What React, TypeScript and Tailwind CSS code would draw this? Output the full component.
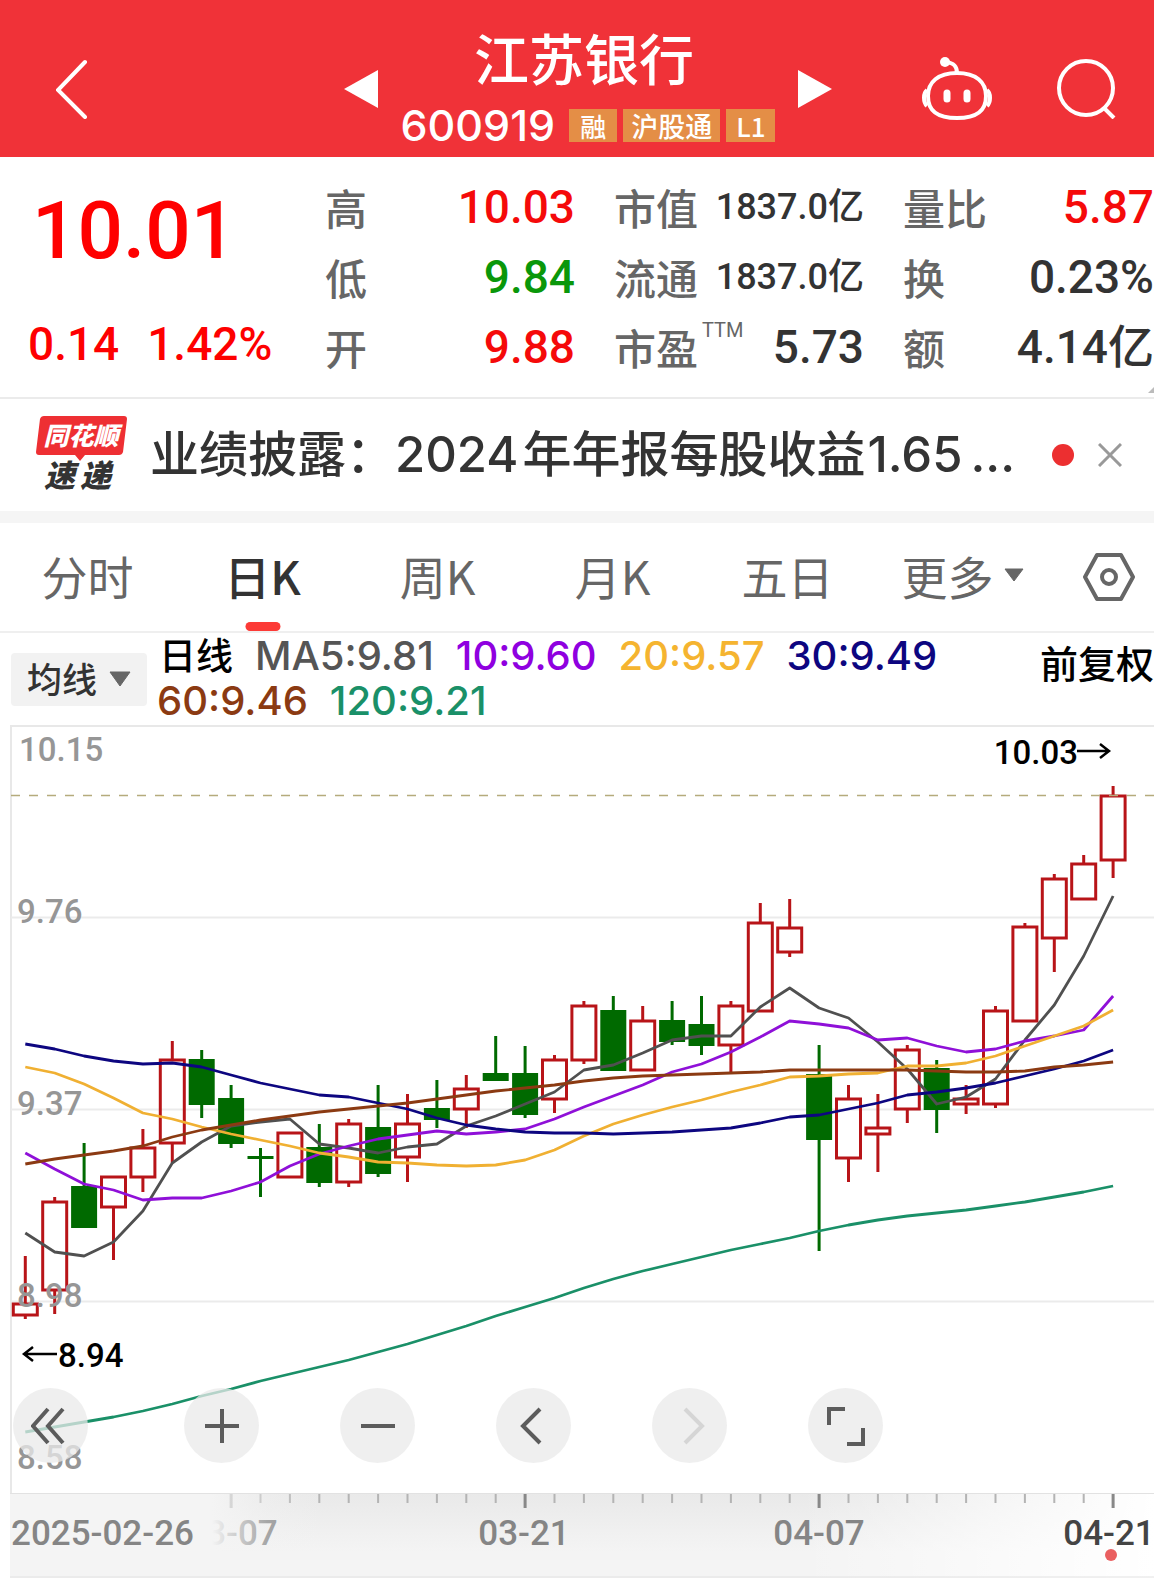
import clsx from 'clsx';

const SLOT = 29.4;
const FIRST_X = 25.3;
const slotX = (i: number) => FIRST_X + i * SLOT;

// [direction, body top, body bottom, high, low] in chart units
type Candle = ['up' | 'down', number, number, number, number];

const candles: Candle[] = [
  ['up', 1304, 1315, 1256, 1319],
  ['up', 1202, 1290, 1197, 1314],
  ['down', 1186, 1228, 1143, 1228],
  ['up', 1177, 1207, 1177, 1260],
  ['up', 1148, 1177, 1129, 1192],
  ['up', 1060, 1143, 1041, 1163],
  ['down', 1059, 1105, 1050, 1118],
  ['down', 1098, 1144, 1085, 1148],
  ['down', 1156, 1159, 1148, 1197],
  ['up', 1133, 1177, 1133, 1177],
  ['down', 1147, 1183, 1124, 1187],
  ['up', 1124, 1182, 1119, 1187],
  ['down', 1127, 1174, 1085, 1177],
  ['up', 1124, 1157, 1094, 1182],
  ['down', 1108, 1120, 1080, 1128],
  ['up', 1089, 1109, 1075, 1128],
  ['down', 1073, 1081, 1036, 1081],
  ['down', 1073, 1115, 1046, 1118],
  ['up', 1060, 1099, 1055, 1113],
  ['up', 1006, 1060, 1001, 1064],
  ['down', 1010, 1071, 996, 1071],
  ['up', 1021, 1070, 1006, 1070],
  ['down', 1020, 1042, 1001, 1045],
  ['down', 1024, 1046, 996, 1055],
  ['up', 1006, 1045, 1001, 1072],
  ['up', 923, 1011, 903, 1011],
  ['up', 928, 952, 899, 957],
  ['down', 1074, 1140, 1045, 1251],
  ['up', 1099, 1158, 1085, 1182],
  ['up', 1128, 1134, 1094, 1172],
  ['up', 1050, 1109, 1045, 1123],
  ['down', 1068, 1110, 1060, 1133],
  ['up', 1099, 1104, 1085, 1114],
  ['up', 1011, 1104, 1006, 1108],
  ['up', 927, 1021, 923, 1021],
  ['up', 879, 938, 874, 972],
  ['up', 864, 899, 855, 899],
  ['up', 796, 860, 786, 878],
];

const averages = [
  {
    color: '#505050',
    values: [1233, 1252, 1256, 1242, 1211, 1163, 1142, 1126, 1122, 1119, 1144, 1148, 1153, 1147, 1144, 1126, 1116, 1104, 1092, 1070, 1065, 1053, 1040, 1036, 1036, 1007, 988, 1008, 1018, 1042, 1069, 1104, 1097, 1079, 1040, 1005, 956, 896],
  },
  {
    color: '#8f10d8',
    values: [1153, 1169, 1184, 1190, 1200, 1198, 1198, 1191, 1182, 1166, 1154, 1146, 1139, 1135, 1131, 1134, 1132, 1129, 1119, 1107, 1096, 1085, 1072, 1064, 1052, 1037, 1021, 1024, 1028, 1040, 1038, 1046, 1052, 1049, 1041, 1036, 1030, 996],
  },
  {
    color: '#f0b032',
    values: [1067, 1073, 1084, 1098, 1113, 1119, 1127, 1134, 1140, 1146, 1153, 1157, 1162, 1163, 1165, 1166, 1165, 1160, 1150, 1136, 1124, 1115, 1107, 1100, 1092, 1085, 1077, 1076, 1074, 1073, 1066, 1066, 1063, 1056, 1046, 1036, 1026, 1010],
  },
  {
    color: '#0d0680',
    values: [1044, 1049, 1056, 1061, 1064, 1063, 1067, 1075, 1083, 1089, 1095, 1097, 1103, 1109, 1118, 1125, 1129, 1132, 1133, 1133, 1134, 1133, 1132, 1130, 1128, 1123, 1117, 1115, 1109, 1103, 1095, 1092, 1088, 1083, 1076, 1069, 1061, 1050],
  },
  {
    color: '#8b3a12',
    values: [1164, 1159, 1155, 1151, 1146, 1137, 1130, 1125, 1120, 1116, 1112, 1109, 1106, 1103, 1099, 1095, 1091, 1088, 1085, 1081, 1078, 1076, 1075, 1074, 1073, 1072, 1070, 1070, 1070, 1070, 1070, 1071, 1072, 1072, 1071, 1067, 1065, 1062],
  },
  {
    color: '#1a9068',
    values: [1432, 1427, 1422, 1417, 1411, 1404, 1396, 1389, 1381, 1374, 1367, 1360, 1352, 1344, 1335, 1326, 1316, 1307, 1298, 1288, 1279, 1271, 1264, 1257, 1250, 1244, 1238, 1231, 1225, 1220, 1216, 1213, 1210, 1206, 1202, 1197, 1192, 1186],
  },
];

const priceLabels = [
  { text: '10.15', x: 19, y: 761 },
  { text: '9.76', x: 17, y: 923 },
  { text: '9.37', x: 17, y: 1115 },
  { text: '8.98', x: 17, y: 1307 },
  { text: '8.58', x: 17, y: 1469 },
];

const tabs = ['分时', '日K', '周K', '月K', '五日'];

const legend = [
  { text: 'MA5:9.81', className: 'text-[#555555]' },
  { text: '10:9.60', className: 'text-[#8f00e0]' },
  { text: '20:9.57', className: 'text-[#f5b430]' },
  { text: '30:9.49', className: 'text-[#0d0680]' },
  { text: '60:9.46', className: 'text-[#8b3a12]' },
  { text: '120:9.21', className: 'text-[#1a9068]' },
];

const Header = () => (
  <header className="relative flex h-[157px] items-center justify-between bg-[#f03238] text-white">
    <button type="button" aria-label="返回" className="ml-14">
      <svg width="32" height="60" viewBox="0 0 32 60" fill="none" stroke="currentColor" strokeWidth="4" strokeLinecap="round" className="mt-5">
        <path d="M29 3 L2 31 L29 58" />
      </svg>
    </button>
    <div className="absolute inset-x-0 top-0 flex items-center justify-center gap-5 pl-[22px]">
      <button type="button" aria-label="上一只" className="mt-5">
        <svg width="34" height="38" viewBox="0 0 34 38" fill="currentColor">
          <path d="M34 0 V38 L0 19 Z" />
        </svg>
      </button>
      <div className="flex h-[157px] w-[380px] flex-col items-center pt-6">
        <h1 className="pr-2 text-[55px] font-medium leading-[64px]">江苏银行</h1>
        <div className="mt-3 flex items-center gap-1.5 whitespace-nowrap">
          <span className="mr-2 font-[Inter] text-[43px] font-medium leading-[50px]">600919</span>
          <span className="bg-[#e48e46] px-[11px] text-[26px] font-medium leading-[33px]">融</span>
          <span className="bg-[#e48e46] px-2 text-[27px] font-medium leading-[33px]">沪股通</span>
          <span className="bg-[#e48e46] px-2.5 text-[26px] font-medium leading-[33px]">L1</span>
        </div>
      </div>
      <button type="button" aria-label="下一只" className="mt-5">
        <svg width="34" height="38" viewBox="0 0 34 38" fill="currentColor">
          <path d="M0 0 V38 L34 19 Z" />
        </svg>
      </button>
    </div>
    <div className="relative mr-[38px] mt-5 flex items-center gap-[64px]">
      <button type="button" aria-label="智能助手">
        <svg width="70" height="66" viewBox="0 0 70 66" fill="none" stroke="currentColor" strokeWidth="4">
          <circle cx="23" cy="6" r="5" fill="currentColor" stroke="none" />
          <path d="M24 6 C32 7 35 10 35 17" />
          <path d="M35 17 C54 17 64 26 64 40 C64 55 55 62 35 62 C15 62 6 55 6 40 C6 26 16 17 35 17 Z" />
          <path d="M5 34 C1 37 1 46 5 50 M65 34 C69 37 69 46 65 50" strokeWidth="4" />
          <path d="M25 37 V43 M45 37 V43" strokeWidth="7" strokeLinecap="round" />
        </svg>
      </button>
      <button type="button" aria-label="搜索">
        <svg width="60" height="60" viewBox="0 0 60 60" fill="none" stroke="currentColor" strokeWidth="4">
          <circle cx="30" cy="29" r="27" />
          <path d="M48 49 L58 59" />
        </svg>
      </button>
    </div>
  </header>
);

const Stat = ({ label, sup, value, className }: { label: string; sup?: string; value: string; className: string }) => (
  <div className="flex justify-between whitespace-nowrap">
    <dt className="flex">
      {label}
      {sup && <sup className="top-0 ml-1 font-[Roboto] text-[20px] font-normal leading-[36px]">{sup}</sup>}
    </dt>
    <dd className={clsx("font-[Roboto,'Noto_Sans_CJK_SC',sans-serif]", className)}>{value}</dd>
  </div>
);

const Quote = () => (
  <section className="relative flex h-[242px] border-b-2 border-[#ebebeb] text-[42px] font-medium leading-[70px] text-[#666666]">
    <div className="w-[325px] shrink-0 pl-7 font-[Roboto] text-[#fe0000]">
      <div className="pt-6 pl-1 text-[80px] leading-[100px]">10.01</div>
      <div className="mt-7 flex gap-7 text-[46px]">
        <span>0.14</span>
        <span>1.42%</span>
      </div>
    </div>
    <dl className="grid flex-1 grid-cols-[250px_250px_1fr] grid-rows-[70px_70px_70px] gap-x-[39px] pt-[15px]">
      <Stat label="高" value="10.03" className="text-[46px] text-[#f50a0a]" />
      <Stat label="市值" value="1837.0亿" className="text-[36px] text-[#333333]" />
      <Stat label="量比" value="5.87" className="text-[46px] text-[#f50a0a]" />
      <Stat label="低" value="9.84" className="text-[46px] text-[#0a970a]" />
      <Stat label="流通" value="1837.0亿" className="text-[36px] text-[#333333]" />
      <Stat label="换" value="0.23%" className="text-[46px] text-[#333333]" />
      <Stat label="开" value="9.88" className="text-[46px] text-[#f50a0a]" />
      <Stat label="市盈" sup="TTM" value="5.73" className="text-[46px] text-[#333333]" />
      <Stat label="额" value="4.14亿" className="text-[46px] text-[#333333]" />
    </dl>
    <svg width="6" height="6" viewBox="0 0 6 6" className="absolute bottom-1 right-0">
      <path d="M6 0 V6 H0 Z" fill="#bbbbbb" />
    </svg>
  </section>
);

const News = () => (
  <section className="flex h-[124px] items-center border-b-[12px] border-[#f5f5f5] pl-9 pr-8">
    <svg width="92" height="80" viewBox="0 -1 92 80" className="shrink-0 overflow-visible" role="img" aria-label="同花顺速递">
      <path d="M8 0 H88 Q91 0 91 3 L87 36 Q86 39 83 39 H49 L44 45 L39 39 H3 Q0 39 0 36 L4 3 Q5 0 8 0 Z" fill="#ee2f33" />
      <text x="45" y="29" textAnchor="middle" fontSize="25" fontWeight="900" fontStyle="italic" fill="#ffffff">同花顺</text>
      <text x="8" y="71" fontSize="31" fontWeight="900" fontStyle="italic" fill="#333333">速</text>
      <text x="44" y="71" fontSize="31" fontWeight="900" fontStyle="italic" fill="#333333">递</text>
    </svg>
    <p className="ml-[22px] flex-1 whitespace-nowrap font-[Inter,'Noto_Sans_CJK_SC',sans-serif] text-[49px] font-medium leading-[60px] text-[#333333]">
      业绩披露：<span className="mr-1">2024</span>年年报每股收益<span className="ml-0.5">1.65</span>
      <span className="ml-2">...</span>
    </p>
    <span className="mr-6 size-[22px] rounded-full bg-[#ec2f30]" />
    <button type="button" aria-label="关闭">
      <svg width="24" height="24" viewBox="0 0 24 24" stroke="#999999" strokeWidth="3">
        <path d="M1 1 L23 23 M23 1 L1 23" />
      </svg>
    </button>
  </section>
);

const Tabs = () => (
  <nav className="flex h-[110px] items-stretch border-b-2 border-[#efefef] pr-[19px] text-[46px] leading-[60px] text-[#666666]">
    {tabs.map((tab) => {
      const active = tab === '日K';
      return (
        <button key={tab} type="button" className={clsx('relative flex-1 pb-1', active && 'font-medium text-[#333333]')}>
          {tab}
          {active && <span className="absolute bottom-0 left-1/2 h-[9px] w-[35px] -translate-x-1/2 rounded-full bg-[#fc3a36]" />}
        </button>
      );
    })}
    <button type="button" className="flex flex-1 items-center justify-center gap-2.5 whitespace-nowrap pb-1">
      更多
      <svg width="20" height="14" viewBox="0 0 20 14">
        <path d="M1 1 H19 L10 13 Z" fill="#666666" stroke="#666666" strokeLinejoin="round" />
      </svg>
    </button>
    <button type="button" aria-label="设置" className="ml-[33px]">
      <svg width="52" height="48" viewBox="0 0 52 48" fill="none" stroke="#666666" strokeWidth="4" strokeLinejoin="round">
        <path d="M14 2 H38 L50 24 L38 46 H14 L2 24 Z" />
        <circle cx="26" cy="24" r="7" />
      </svg>
    </button>
  </nav>
);

const Legend = () => (
  <section className="flex h-[91px] items-start pl-[11px]">
    <button type="button" className="mt-5 flex h-[53px] w-[136px] shrink-0 items-center gap-3 rounded bg-[#f2f2f2] pb-0.5 pl-4 text-[35px] font-medium text-[#333333]">
      均线
      <svg width="22" height="16" viewBox="0 0 22 16">
        <path d="M1 1 H21 L11 15 Z" fill="#666666" stroke="#666666" strokeLinejoin="round" />
      </svg>
    </button>
    <div className="ml-2.5 flex w-[830px] flex-wrap gap-x-[22px] font-[Inter] text-[40px] font-medium leading-[45px]">
      <span className="pl-0.5 font-['Noto_Sans_CJK_SC'] text-[37px] leading-[43px] text-black">日线</span>
      {legend.map((item) => (
        <span key={item.text} className={item.className}>{item.text}</span>
      ))}
    </div>
    <button type="button" className="ml-auto whitespace-nowrap text-[38px] font-medium leading-[58px] text-black">前复权</button>
  </section>
);

const CandleShape = ({ candle, x }: { candle: Candle; x: number }) => {
  const [direction, top, bottom, high, low] = candle;
  if (direction === 'down') {
    return (
      <g fill="#006a00">
        <rect x={x - 1.5} y={high} width="3" height={low - high} />
        <rect x={x - 13} y={top} width="26" height={bottom - top} />
      </g>
    );
  }
  return (
    <g fill="none" stroke="#b81418" strokeWidth="3">
      <path d={`M${x} ${high} V${top} M${x} ${bottom} V${low}`} />
      <rect x={x - 12} y={top} width="24" height={bottom - top} />
    </g>
  );
};

const Chart = () => (
  <svg viewBox="0 724 1154 769" className="block h-auto w-full font-[Roboto] font-medium" role="img" aria-label="日K线图">
    <path d="M1154 726 H11 V1493" fill="none" stroke="#e8e8e8" strokeWidth="2" />
    <path d="M11 917.5 H1154 M11 1109.5 H1154 M11 1301.5 H1154" stroke="#ebebeb" strokeWidth="2" />
    {candles.map((candle, i) => (
      <CandleShape key={i} candle={candle} x={slotX(i)} />
    ))}
    <path d="M11 795.5 H1154" stroke="#b5ab7c" strokeWidth="1.5" strokeDasharray="9 9" />
    {averages.map((line) => (
      <polyline
        key={line.color}
        points={line.values.map((y, i) => `${slotX(i)},${y}`).join(' ')}
        fill="none"
        stroke={line.color}
        strokeWidth="2.8"
        strokeLinejoin="round"
      />
    ))}
    <g fill="#969696" fontSize="33">
      {priceLabels.map((label) => (
        <text key={label.text} x={label.x} y={label.y}>{label.text}</text>
      ))}
    </g>
    <g fill="#000000" fontSize="33">
      <text x="1078" y="764" textAnchor="end">10.03</text>
      <text x="58" y="1367">8.94</text>
    </g>
    <g fill="none" stroke="#000000" strokeWidth="2.5">
      <path d="M1077 751 H1109 M1100 744 L1109 751 L1100 758" />
      <path d="M57 1354 H24 M33 1347 L24 1354 L33 1361" />
    </g>
  </svg>
);

const tools = [
  { label: '最早', path: 'M17 3 L2 20 L17 37 M32 3 L17 20 L32 37' },
  { label: '放大', path: 'M3 20 H37 M20 3 V37' },
  { label: '缩小', path: 'M3 20 H37' },
  { label: '左移', path: 'M26 3 L9 20 L26 37' },
  { label: '右移', path: 'M15 3 L32 20 L15 37', disabled: true },
  { label: '全屏', path: 'M3 19 V3 H19 M37 22 V38 H21' },
];

const Toolbar = () => (
  <div className="absolute bottom-[30px] left-[13px] flex gap-[81px]">
    {tools.map((tool, i) => (
      <button
        key={tool.label}
        type="button"
        aria-label={tool.label}
        disabled={tool.disabled}
        className={clsx('flex size-[75px] items-center justify-center rounded-full bg-[#e9e9e9]/75', i === 1 && 'ml-[15px]')}
      >
        <svg width="40" height="40" viewBox="0 0 40 40" fill="none" stroke={tool.disabled ? '#d5d5d5' : '#5c5c5c'} strokeWidth="4">
          <path d={tool.path} />
        </svg>
      </button>
    ))}
  </div>
);

const Axis = () => (
  <svg viewBox="0 1493 1154 85" className="block h-auto w-full font-[Roboto] font-medium" role="img" aria-label="日期轴">
    <defs>
      <linearGradient id="shade" x1="0" y1="0" x2="0" y2="1">
        <stop offset="0" stopColor="#e9e9e9" />
        <stop offset="0.7" stopColor="#f4f4f4" />
      </linearGradient>
      <linearGradient id="fadeLeft" x1="0" y1="0" x2="1" y2="0">
        <stop offset="0" stopColor="#f4f4f4" />
        <stop offset="0.15" stopColor="#f4f4f4" stopOpacity="0.75" />
        <stop offset="0.5" stopColor="#f4f4f4" stopOpacity="0.3" />
        <stop offset="1" stopColor="#f4f4f4" stopOpacity="0" />
      </linearGradient>
      <linearGradient id="fadeRight" x1="0" y1="0" x2="1" y2="0">
        <stop offset="0" stopColor="#ffffff" stopOpacity="0" />
        <stop offset="1" stopColor="#ffffff" />
      </linearGradient>
    </defs>
    <rect x="10" y="1493" width="1144" height="85" fill="url(#shade)" />
    <rect x="800" y="1493" width="354" height="85" fill="url(#fadeRight)" />
    {candles.map((_, i) => {
      if (i < 7) return null;
      const major = i % 10 === 7;
      return (
        <rect
          key={i}
          x={slotX(i) - (major ? 1.5 : 1)}
          y="1493"
          width={major ? 3 : 2}
          height={major ? 15 : 10}
          fill={major ? '#888888' : '#b4b4b4'}
        />
      );
    })}
    <g fill="#858585" fontSize="35">
      <text x="232" y="1545" textAnchor="middle">03-07</text>
      <rect x="212" y="1493" width="110" height="84" fill="url(#fadeLeft)" />
      <rect x="10" y="1493" width="202" height="84" fill="#f4f4f4" />
      <text x="11" y="1545">2025-02-26</text>
      <text x="524" y="1545" textAnchor="middle">03-21</text>
      <text x="819" y="1545" textAnchor="middle">04-07</text>
      <text x="1109" y="1545" textAnchor="middle" fill="#444444">04-21</text>
    </g>
    <path d="M10 1493.5 H1154 M10 1577 H1154" stroke="#e2e2e2" />
    <circle cx="1111" cy="1555" r="6" fill="#ea5f60" />
  </svg>
);

export default function App() {
  return (
    <main className="overflow-hidden bg-white font-['Noto_Sans_CJK_SC',sans-serif]">
      <Header />
      <Quote />
      <News />
      <Tabs />
      <Legend />
      <div className="relative">
        <Chart />
        <Toolbar />
      </div>
      <Axis />
    </main>
  );
}
